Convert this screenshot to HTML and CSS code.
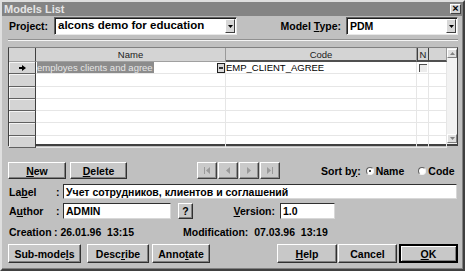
FILE: index.html
```html
<!DOCTYPE html>
<html lang="en">
<head>
    <meta charset="UTF-8">
    <title>Models List</title>
    <link rel="stylesheet" href="styles.css">
</head>
<body>
    <div class="window">
        <div class="titlebar">
            <span class="title">Models List</span>
            <span class="close">&#215;</span>
        </div>

        <div class="content">
            <!-- project / model type -->
            <div class="row top-row">
                <span class="project-lbl">Pro<u>j</u>ect:</span>
                <div class="combo project-combo">
                    <span class="combo-text">alcons demo for education</span>
                    <span class="combo-btn"><svg width="5" height="3" viewBox="0 0 5 3"><path d="M0 0h5L2.5 3z" fill="#000"/></svg></span>
                </div>
                <span class="type-lbl">Model <u>T</u>ype:</span>
                <div class="combo type-combo">
                    <span class="combo-text">PDM</span>
                    <span class="combo-btn"><svg width="5" height="3" viewBox="0 0 5 3"><path d="M0 0h5L2.5 3z" fill="#000"/></svg></span>
                </div>
            </div>

            <div class="separator"></div>

            <!-- models grid -->
            <div class="grid-wrap">
                <div class="grid">
                    <div class="hcell ind"></div>
                    <div class="hcell">Name</div>
                    <div class="hcell dark">Code</div>
                    <div class="hcell dark n-head">N</div>
                    <div class="hcell dark"></div>

                    <div class="ind cell-ind">
                        <svg width="7" height="6" viewBox="0 0 7 6"><path d="M0 2h3V0l4 3-4 3V4H0z" fill="#000"/></svg>
                    </div>
                    <div class="cell name-cell">
                        <span class="selected">employes clients and agree</span>
                        <span class="ellipsis"><i></i></span>
                    </div>
                    <div class="cell">EMP_CLIENT_AGREE</div>
                    <div class="cell"><span class="check"></span></div>
                    <div class="cell"></div>

                    <div class="ind cell-ind"></div><div class="cell"></div><div class="cell"></div><div class="cell"></div><div class="cell"></div>
                    <div class="ind cell-ind"></div><div class="cell"></div><div class="cell"></div><div class="cell"></div><div class="cell"></div>
                    <div class="ind cell-ind"></div><div class="cell"></div><div class="cell"></div><div class="cell"></div><div class="cell"></div>
                    <div class="ind cell-ind"></div><div class="cell"></div><div class="cell"></div><div class="cell"></div><div class="cell"></div>
                    <div class="ind cell-ind"></div><div class="cell"></div><div class="cell"></div><div class="cell"></div><div class="cell"></div>
                    <div class="ind cell-ind"></div><div class="cell"></div><div class="cell"></div><div class="cell"></div><div class="cell"></div>
                </div>
                <div class="vscroll">
                    <span class="sbtn"><svg width="5" height="3" viewBox="0 0 5 3"><path d="M2.5 0L5 3H0z" fill="#808080"/></svg></span>
                    <span class="sbtn"><svg width="5" height="3" viewBox="0 0 5 3"><path d="M0 0h5L2.5 3z" fill="#808080"/></svg></span>
                </div>
            </div>

            <!-- grid controls -->
            <div class="row controls">
                <button class="btn new-btn"><u>N</u>ew</button>
                <button class="btn delete-btn"><u>D</u>elete</button>
                <div class="nav">
                    <span class="nbtn"><svg width="6" height="7" viewBox="0 0 6 7"><path d="M0 0h1v7H0zM6 0v7L2 3.5z" fill="#9a9a9a"/></svg></span>
                    <span class="nbtn"><svg width="4" height="7" viewBox="0 0 4 7"><path d="M4 0v7L0 3.5z" fill="#9a9a9a"/></svg></span>
                    <span class="nbtn"><svg width="4" height="7" viewBox="0 0 4 7"><path d="M0 0v7l4-3.5z" fill="#9a9a9a"/></svg></span>
                    <span class="nbtn"><svg width="6" height="7" viewBox="0 0 6 7"><path d="M0 0v7l4-3.5zM5 0h1v7H5z" fill="#9a9a9a"/></svg></span>
                </div>
                <span class="sort-lbl">Sort b<u>y</u>:</span>
                <span class="radio"><span class="dot on"></span>Name</span>
                <span class="radio code-radio"><span class="dot"></span>Code</span>
            </div>

            <div class="row field-row label-row">
                <span class="field-lbl">La<u>b</u>el</span>
                <span class="colon">:</span>
                <div class="edit label-edit">Учет сотрудников, клиентов и соглашений</div>
            </div>

            <div class="row field-row author-row">
                <span class="field-lbl">A<u>u</u>thor</span>
                <span class="colon">:</span>
                <div class="edit author-edit">ADMIN</div>
                <button class="btn q-btn">?</button>
                <span class="version-lbl"><u>V</u>ersion:</span>
                <div class="edit version-edit">1.0</div>
            </div>

            <div class="row info-row">
                <span class="field-lbl">Creation</span>
                <span class="info-val">: 26.01.96&nbsp; 13:15</span>
                <span class="mod">Modification:&nbsp; 07.03.96&nbsp; 13:19</span>
            </div>

            <div class="row bottom">
                <button class="btn sub-btn">Sub-mode<u>l</u>s</button>
                <button class="btn desc-btn">Desc<u>r</u>ibe</button>
                <button class="btn annot-btn">Anno<u>t</u>ate</button>
                <button class="btn help-btn"><u>H</u>elp</button>
                <button class="btn cancel-btn">Cancel</button>
                <button class="btn ok-btn"><u>O</u>K</button>
            </div>
        </div>
    </div>
</body>
</html>
```

FILE: styles.css
```css
* {
    box-sizing: border-box;
}

body {
    margin: 0;
    background-color: #c0c0c0;
    font-family: "Liberation Sans", Arial, sans-serif;
    font-size: 10.5px;
    font-weight: bold;
    color: #000;
}

u {
    text-decoration-thickness: 1px;
    text-underline-offset: 1px;
}

.window {
    width: 465px;
    height: 271px;
    border: 2px solid;
    border-color: #dfdfdf #404040 #404040 #dfdfdf;
    box-shadow: inset -1px -1px #808080;
    background-color: #c0c0c0;
}

.titlebar {
    height: 14px;
    margin-right: 1px;
    background-color: #848484;
    display: flex;
    align-items: center;
    justify-content: space-between;
    padding: 0 1px 0 2px;
}

.title {
    color: #e4e4e4;
    font-size: 11px;
}

.close {
    width: 11px;
    height: 10px;
    background-color: #d4d4d4;
    border: 1px solid;
    border-color: #fff #404040 #404040 #fff;
    font-size: 11px;
    line-height: 7px;
    text-align: center;
}

.content {
    padding: 1px 5px 0 6px;
}

.row {
    display: flex;
    align-items: center;
}

/* top row */
.top-row {
    height: 18px;
}

.project-lbl {
    width: 46px;
    padding-left: 1px;
}

.combo {
    height: 18px;
    display: flex;
    align-items: stretch;
    background-color: #fff;
    border: 1px solid;
    border-color: #606060 #e8e8e8 #e8e8e8 #606060;
    box-shadow: inset 1px 1px #202020;
}

.project-combo {
    width: 183px;
}

.type-combo {
    width: 112px;
}

.combo-text {
    flex: 1;
    padding: 2px 0 0 3px;
}

.project-combo .combo-text {
    font-size: 11.5px;
    padding-top: 1px;
}

.combo-btn {
    width: 10px;
    margin: 1px 1px 1px 0;
    background-color: #d8d8d8;
    border: 1px solid;
    border-color: #fff #404040 #404040 #fff;
    display: flex;
    align-items: center;
    justify-content: center;
}

.type-lbl {
    margin-left: auto;
    margin-right: 5px;
}

.separator {
    margin-top: 4px;
    height: 2px;
    border-top: 1px solid #909090;
    border-bottom: 1px solid #f4f4f4;
}

/* grid */
.grid-wrap {
    margin-top: 6px;
    height: 99px;
    width: 450px;
    display: flex;
    border-left: 1px solid #404040;
    border-top: 1px solid #808080;
    border-bottom: 2px solid #404040;
    border-right: 1px solid #404040;
    background-color: #fff;
}

.grid {
    display: grid;
    grid-template-columns: 27px 190px 191px 12px 18px;
    grid-template-rows: 14px repeat(7, 12.3px);
    font-size: 9.5px;
    font-weight: normal;
}

.hcell {
    background-color: #d4d4d4;
    border-right: 1px solid #9a9a9a;
    border-bottom: 1px solid #a0a0a0;
    text-align: center;
    line-height: 13px;
    color: #202020;
}

.hcell.dark {
    border-bottom: 2px solid #505050;
}

.n-head {
    border-left: 1px solid #404040;
    border-right: 1px solid #404040;
}

.ind {
    background-color: #d4d4d4;
    border-right: 1px solid #404040;
}

.cell-ind {
    border-bottom: 1px solid #606060;
    box-shadow: inset 1px 1px #f4f4f4;
    display: flex;
    align-items: center;
    justify-content: center;
}

.cell {
    border-right: 1px solid #e6e6e6;
    border-bottom: 1px solid #e6e6e6;
    line-height: 12px;
    white-space: nowrap;
    overflow: hidden;
}

.name-cell {
    display: flex;
    justify-content: space-between;
    align-items: center;
    padding: 0 0 0 1px;
}

.selected {
    background-color: #8c8c8c;
    color: #e6e6e6;
    line-height: 11px;
    padding-right: 1px;
}

.ellipsis {
    width: 8px;
    height: 10px;
    border: 1px solid #202020;
    background-color: #d8d8d8;
    display: flex;
    align-items: center;
    justify-content: center;
}

.ellipsis i {
    width: 4px;
    height: 2px;
    background-color: #303030;
}

.check {
    display: block;
    width: 8px;
    height: 8px;
    margin: 2px 0 0 2px;
    border-top: 1px solid #505050;
    border-left: 1px solid #505050;
    background-color: #ececec;
}

.vscroll {
    width: 10px;
    margin-left: auto;
    background-color: #f2f2f2;
    display: flex;
    flex-direction: column;
    justify-content: space-between;
    padding: 1px 0;
}

.sbtn {
    height: 9px;
    background-color: #e0e0e0;
    border: 1px solid;
    border-color: #fff #808080 #808080 #fff;
    display: flex;
    align-items: center;
    justify-content: center;
}

/* buttons */
.btn {
    font: inherit;
    color: #000;
    background-color: #c8c8c8;
    border: 1px solid;
    border-color: #fff #303030 #303030 #fff;
    box-shadow: inset -1px -1px #808080;
    padding: 0;
    margin: 0;
}

.controls {
    margin-top: 16px;
    height: 17px;
}

.new-btn {
    width: 58px;
    height: 17px;
}

.delete-btn {
    width: 57px;
    height: 17px;
    margin-left: 4px;
}

.nav {
    display: flex;
    gap: 1px;
    margin-left: 70px;
}

.nbtn {
    width: 20px;
    height: 17px;
    background-color: #cacaca;
    border: 1px solid;
    border-color: #fff #404040 #404040 #fff;
    box-shadow: inset -1px -1px #909090;
    display: flex;
    align-items: center;
    justify-content: center;
}

.sort-lbl {
    margin-left: 41px;
}

.radio {
    display: flex;
    align-items: center;
    margin-left: 5px;
}

.code-radio {
    margin-left: 14px;
}

.dot {
    width: 8px;
    height: 8px;
    border-radius: 50%;
    border: 1px solid;
    border-color: #606060 #f4f4f4 #f4f4f4 #606060;
    background-color: #fff;
    margin-right: 2px;
    position: relative;
}

.dot.on::after {
    content: "";
    position: absolute;
    left: 2px;
    top: 2px;
    width: 2px;
    height: 2px;
    border-radius: 50%;
    background-color: #000;
}

/* fields */
.field-row {
    margin-top: 5px;
}

.label-row {
    height: 15px;
}

.author-row {
    margin-top: 4px;
    height: 16px;
}

.field-lbl {
    width: 46px;
    padding-left: 1px;
}

.colon {
    width: 9px;
    padding-left: 2px;
}

.edit {
    height: 100%;
    background-color: #fff;
    border: 1px solid;
    border-color: #303030 #d8d8d8 #d8d8d8 #303030;
    padding: 1px 0 0 2px;
    white-space: nowrap;
}

.label-edit {
    flex: 1;
    margin-right: 1px;
}

.author-edit {
    width: 108px;
}

.q-btn {
    width: 15px;
    height: 16px;
    margin-left: 7px;
}

.version-lbl {
    width: 87px;
    text-align: right;
    padding-right: 5px;
}

.version-edit {
    width: 55px;
}

.info-row {
    margin-top: 5px;
    height: 16px;
}

.info-val {
    width: 129px;
}

.bottom {
    margin-top: 4px;
    height: 19px;
}

.bottom .btn {
    height: 19px;
}

.sub-btn {
    width: 73px;
}

.desc-btn {
    width: 62px;
    margin-left: 6px;
}

.annot-btn {
    width: 58px;
    margin-left: 3px;
}

.help-btn {
    width: 60px;
    margin-left: 67px;
}

.cancel-btn {
    width: 59px;
    margin-left: 1px;
}

.ok-btn {
    width: 59px;
    margin-left: 2px;
    border: 2px solid;
    border-color: #000;
    box-shadow: inset 1px 1px #fff, inset -1px -1px #808080;
}
```
